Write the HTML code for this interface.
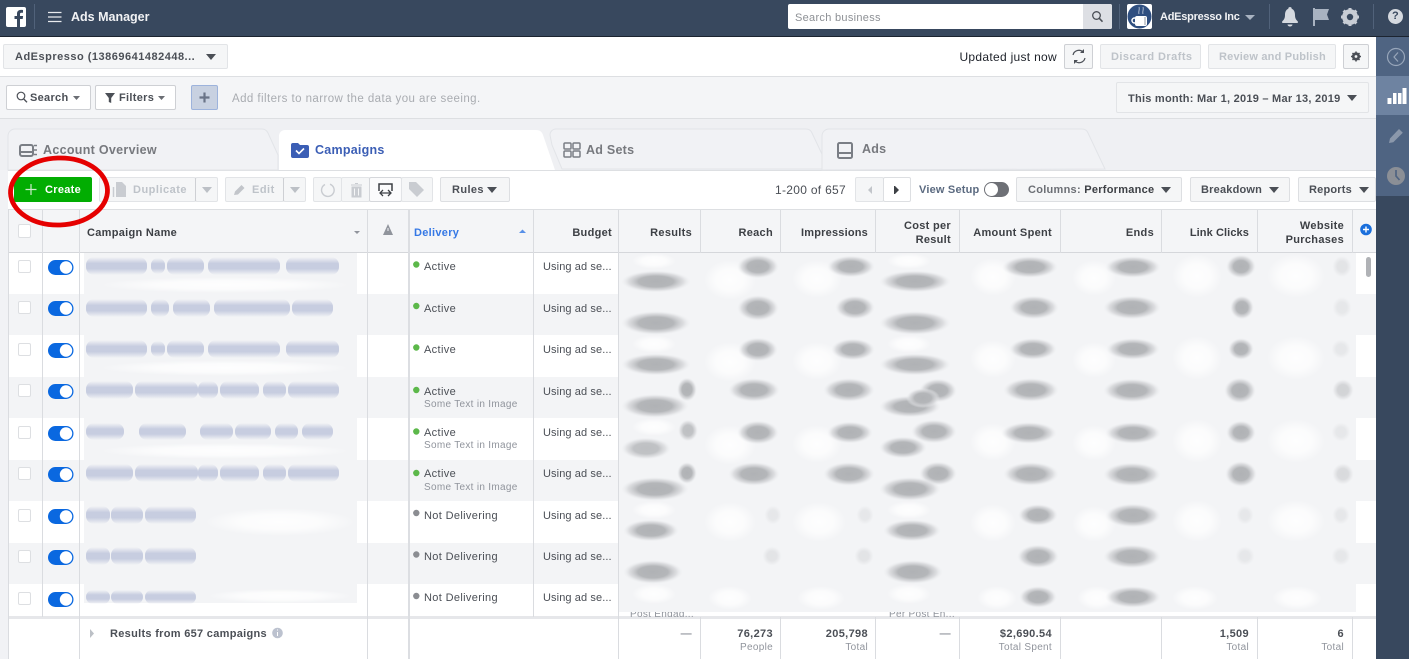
<!DOCTYPE html>
<html><head><meta charset="utf-8"><title>Ads Manager</title>
<style>
html,body{margin:0;padding:0}
body{width:1409px;height:659px;overflow:hidden;position:relative;background:#f1f2f5;font-family:"Liberation Sans",sans-serif;font-size:11px;color:#4b4f56}
#p{position:absolute;left:0;top:0;width:1409px;height:659px;overflow:hidden}
.a{position:absolute;box-sizing:border-box}
.t{position:absolute;white-space:nowrap;line-height:14px;letter-spacing:.35px}
.r{text-align:right}
.b{font-weight:bold}
.btn{position:absolute;box-sizing:border-box;background:#f5f6f7;border:1px solid #e2e4e7;border-radius:2px}
.w{background:#fff;border:1px solid #ced0d4}
.d{color:#bec3c9;font-weight:bold}
.h{font-weight:bold;color:#3d4045;letter-spacing:.3px}
.s{color:#90949c;font-size:10px;letter-spacing:.3px}
.v{color:#4b4f56;letter-spacing:.35px}
svg{position:absolute;left:0;top:0}
</style></head><body><div id="p">

<!-- header -->
<div class="a" style="left:0;top:0;width:1409px;height:37px;background:#38485e;border-bottom:1px solid #1c2430"></div>
<!-- white account bar -->
<div class="a" style="left:0;top:37px;width:1376px;height:40px;background:#fff;border-bottom:1px solid #dddfe2"></div>
<!-- filter bar -->
<div class="a" style="left:0;top:77px;width:1376px;height:42px;background:#f4f5f7;border-bottom:1px solid #dddfe2"></div>
<!-- tab zone -->
<div class="a" style="left:0;top:119px;width:1376px;height:51px;background:#eff0f3"></div>
<!-- toolbar -->
<div class="a" style="left:8px;top:170px;width:1368px;height:40px;background:#fff;border-top:1px solid #dddfe2"></div>
<!-- table header -->
<div class="a" style="left:8px;top:209px;width:1368px;height:44px;background:#f4f5f7;border-top:1px solid #dddfe2;border-bottom:1px solid #d5d7db"></div>
<!-- rows -->
<div class="a" style="left:8px;top:253px;width:1368px;height:364px;background:#fff"></div>
<div class="a" style="left:8px;top:294px;width:1368px;height:41px;background:#f3f4f6"></div>
<div class="a" style="left:8px;top:377px;width:1368px;height:41px;background:#f3f4f6"></div>
<div class="a" style="left:8px;top:460px;width:1368px;height:41px;background:#f3f4f6"></div>
<div class="a" style="left:8px;top:543px;width:1368px;height:41px;background:#f3f4f6"></div>
<!-- footer -->
<div class="a" style="left:8px;top:616px;width:1368px;height:43px;background:#fff;border-top:3px solid #e6e7ea"></div>

<svg width="1409" height="659" viewBox="0 0 1409 659">
<defs>
<radialGradient id="gg"><stop offset="0" stop-color="#b0b2b5"/><stop offset=".5" stop-color="#b4b6b9"/><stop offset=".78" stop-color="#d4d5d8" stop-opacity=".75"/><stop offset="1" stop-color="#eceef0" stop-opacity="0"/></radialGradient>
<radialGradient id="gw"><stop offset="0" stop-color="#fff" stop-opacity=".9"/><stop offset=".55" stop-color="#fff" stop-opacity=".7"/><stop offset="1" stop-color="#fff" stop-opacity="0"/></radialGradient>
<linearGradient id="gb" x1="0" y1="0" x2="0" y2="1"><stop offset="0" stop-color="#c7cde0" stop-opacity="0"/><stop offset=".35" stop-color="#c7cde0"/><stop offset=".65" stop-color="#c7cde0"/><stop offset="1" stop-color="#c7cde0" stop-opacity="0"/></linearGradient>
</defs>
<!-- column lines -->
<g stroke="#dadce0" stroke-width="1" fill="none">
<path d="M8.5 209V659M42.5 210V617M79.5 210V659M367.5 210V659M533.5 210V617M618.5 210V659M700.5 210V253M700.5 617V659M780.5 210V253M780.5 617V659M875.5 210V253M875.5 617V659M959.5 210V253M959.5 617V659M1060.5 210V253M1060.5 617V659M1161.5 210V253M1161.5 617V659M1257.5 210V253M1257.5 617V659M1352.5 210V253M1352.5 617V659"/>
</g>
<rect x="408" y="210" width="2" height="449" fill="#dcdee2"/>
<!-- blurred metrics base -->
<rect x="619" y="253" width="737" height="359" fill="#f3f4f6"/>
<rect x="84" y="253" width="273" height="350" fill="#f3f4f6"/>

<!-- white blotches -->
<g fill="url(#gw)">
<ellipse cx="654" cy="261" rx="22" ry="8"/><ellipse cx="730" cy="280" rx="26" ry="20"/><ellipse cx="817" cy="279" rx="25" ry="19"/><ellipse cx="909" cy="261" rx="22" ry="8"/><ellipse cx="993" cy="277" rx="23" ry="19"/><ellipse cx="1094" cy="278" rx="22" ry="18"/><ellipse cx="1197" cy="276" rx="25" ry="22"/><ellipse cx="1296" cy="276" rx="29" ry="22"/>
<ellipse cx="654" cy="344" rx="22" ry="9"/><ellipse cx="730" cy="362" rx="26" ry="20"/><ellipse cx="817" cy="361" rx="25" ry="19"/><ellipse cx="909" cy="344" rx="22" ry="9"/><ellipse cx="993" cy="359" rx="23" ry="19"/><ellipse cx="1094" cy="360" rx="22" ry="18"/><ellipse cx="1197" cy="358" rx="25" ry="22"/><ellipse cx="1296" cy="358" rx="29" ry="22"/>
<ellipse cx="654" cy="427" rx="22" ry="9"/><ellipse cx="730" cy="445" rx="26" ry="20"/><ellipse cx="817" cy="444" rx="25" ry="19"/><ellipse cx="1094" cy="443" rx="22" ry="18"/><ellipse cx="993" cy="442" rx="23" ry="19"/><ellipse cx="1197" cy="441" rx="25" ry="22"/><ellipse cx="1296" cy="441" rx="29" ry="22"/>
<ellipse cx="654" cy="510" rx="22" ry="9"/><ellipse cx="730" cy="522" rx="26" ry="20"/><ellipse cx="819" cy="522" rx="27" ry="20"/><ellipse cx="909" cy="510" rx="22" ry="9"/><ellipse cx="993" cy="523" rx="23" ry="19"/><ellipse cx="1094" cy="524" rx="22" ry="18"/><ellipse cx="1197" cy="521" rx="25" ry="21"/><ellipse cx="1296" cy="521" rx="29" ry="21"/>
<ellipse cx="654" cy="594" rx="22" ry="10"/><ellipse cx="730" cy="598" rx="22" ry="12"/><ellipse cx="821" cy="598" rx="24" ry="12"/><ellipse cx="909" cy="594" rx="22" ry="10"/><ellipse cx="997" cy="598" rx="20" ry="12"/><ellipse cx="1097" cy="598" rx="20" ry="12"/><ellipse cx="1195" cy="598" rx="23" ry="12"/><ellipse cx="1297" cy="598" rx="25" ry="12"/>
<ellipse cx="225" cy="285" rx="125" ry="8"/><ellipse cx="225" cy="368" rx="125" ry="8"/><ellipse cx="225" cy="451" rx="125" ry="8"/><ellipse cx="280" cy="522" rx="75" ry="14"/><ellipse cx="280" cy="596" rx="72" ry="7"/>
</g>

<!-- gray metric blobs -->
<g fill="url(#gg)">
<ellipse cx="656" cy="281.500" rx="35" ry="11"/><ellipse cx="758" cy="266.500" rx="21" ry="12"/><ellipse cx="851" cy="266.500" rx="24" ry="11"/><ellipse cx="915" cy="281.500" rx="36" ry="11"/><ellipse cx="1030" cy="267" rx="28" ry="11"/><ellipse cx="1133" cy="267" rx="28" ry="11"/><ellipse cx="1241" cy="266.500" rx="15" ry="12"/><ellipse cx="1342" cy="266.500" rx="10" ry="11" opacity=".25"/>
<ellipse cx="656" cy="323" rx="35" ry="12"/><ellipse cx="758" cy="308" rx="21" ry="13"/><ellipse cx="855" cy="307.500" rx="20" ry="12"/><ellipse cx="915" cy="323" rx="36" ry="12"/><ellipse cx="1034" cy="307.500" rx="25" ry="12"/><ellipse cx="1132" cy="307.500" rx="29" ry="12"/><ellipse cx="1242" cy="307.500" rx="12" ry="12"/><ellipse cx="1342" cy="307.500" rx="10" ry="11" opacity=".2"/>
<ellipse cx="656" cy="364.500" rx="35" ry="11"/><ellipse cx="758" cy="349.500" rx="20" ry="12"/><ellipse cx="853" cy="349.500" rx="22" ry="11"/><ellipse cx="915" cy="364.500" rx="36" ry="11"/><ellipse cx="1033" cy="349" rx="24" ry="11"/><ellipse cx="1133" cy="349" rx="27" ry="11"/><ellipse cx="1241" cy="349" rx="13" ry="11"/><ellipse cx="1341" cy="349" rx="10" ry="10" opacity=".2"/>
<ellipse cx="687" cy="389.500" rx="10" ry="12"/><ellipse cx="655" cy="406" rx="34" ry="12"/><ellipse cx="754" cy="390" rx="26" ry="12"/><ellipse cx="849" cy="390" rx="26" ry="12"/><ellipse cx="938" cy="390.500" rx="19" ry="12"/><ellipse cx="910" cy="406.500" rx="31" ry="11"/><ellipse cx="923" cy="398" rx="17" ry="10"/><ellipse cx="1031" cy="390" rx="28" ry="12"/><ellipse cx="1132" cy="390.500" rx="29" ry="12"/><ellipse cx="1240" cy="390.500" rx="16" ry="13"/><ellipse cx="1343" cy="390" rx="11" ry="11" opacity=".5"/>
<ellipse cx="688" cy="430.500" rx="10" ry="11" opacity=".8"/><ellipse cx="646" cy="448.500" rx="25" ry="11" opacity=".8"/><ellipse cx="758" cy="432.500" rx="21" ry="12"/><ellipse cx="850" cy="432.500" rx="23" ry="11"/><ellipse cx="934" cy="431.500" rx="23" ry="12"/><ellipse cx="903" cy="447.500" rx="24" ry="11"/><ellipse cx="1029" cy="433" rx="28" ry="11"/><ellipse cx="1133" cy="433" rx="28" ry="11"/><ellipse cx="1241" cy="432.500" rx="15" ry="12"/><ellipse cx="1341" cy="432" rx="10" ry="10" opacity=".2"/>
<ellipse cx="687" cy="473" rx="10" ry="11"/><ellipse cx="655" cy="489" rx="34" ry="12"/><ellipse cx="754" cy="474" rx="26" ry="12"/><ellipse cx="849" cy="474" rx="26" ry="12"/><ellipse cx="938" cy="473.500" rx="19" ry="12"/><ellipse cx="910" cy="489" rx="31" ry="12"/><ellipse cx="1031" cy="474" rx="28" ry="12"/><ellipse cx="1132" cy="474.500" rx="29" ry="12"/><ellipse cx="1241" cy="474" rx="16" ry="13"/><ellipse cx="1343" cy="474" rx="11" ry="11" opacity=".4"/>
<ellipse cx="651" cy="530.500" rx="28" ry="11"/><ellipse cx="773" cy="515" rx="9" ry="10" opacity=".2"/><ellipse cx="865" cy="515" rx="9" ry="10" opacity=".2"/><ellipse cx="912" cy="530.500" rx="29" ry="11"/><ellipse cx="1038" cy="515" rx="20" ry="11"/><ellipse cx="1133" cy="515.500" rx="28" ry="12"/><ellipse cx="1245" cy="515" rx="9" ry="10" opacity=".2"/><ellipse cx="1341" cy="515" rx="9" ry="10" opacity=".2"/>
<ellipse cx="653" cy="572" rx="30" ry="12"/><ellipse cx="772" cy="556" rx="10" ry="10" opacity=".25"/><ellipse cx="864" cy="556" rx="10" ry="10" opacity=".25"/><ellipse cx="913" cy="572" rx="30" ry="12"/><ellipse cx="1038" cy="556.500" rx="21" ry="12"/><ellipse cx="1132" cy="556.500" rx="29" ry="12"/><ellipse cx="1245" cy="556" rx="10" ry="10" opacity=".2"/><ellipse cx="1341" cy="556" rx="10" ry="10" opacity=".2"/>
<ellipse cx="1038" cy="597" rx="19" ry="11"/><ellipse cx="1133" cy="597" rx="28" ry="11"/>
</g>

<!-- blue campaign name blobs -->
<g fill="url(#gb)">
<rect x="86" y="257" width="61" height="18" rx="8"/><rect x="151" y="258" width="14" height="16" rx="7"/><rect x="167" y="257" width="37" height="18" rx="8"/><rect x="208" y="257" width="72" height="18" rx="8"/><rect x="286" y="257" width="53" height="18" rx="8"/>
<rect x="86" y="299" width="61" height="18" rx="8"/><rect x="151" y="299" width="18" height="18" rx="8"/><rect x="173" y="299" width="37" height="18" rx="8"/><rect x="214" y="299" width="76" height="18" rx="8"/><rect x="292" y="299" width="41" height="18" rx="8"/>
<rect x="86" y="340" width="61" height="18" rx="8"/><rect x="151" y="341" width="14" height="16" rx="7"/><rect x="167" y="340" width="37" height="18" rx="8"/><rect x="208" y="340" width="72" height="18" rx="8"/><rect x="286" y="340" width="53" height="18" rx="8"/>
<rect x="86" y="381" width="47" height="18" rx="8"/><rect x="135" y="381" width="63" height="18" rx="8"/><rect x="198" y="381" width="20" height="18" rx="8"/><rect x="220" y="381" width="39" height="18" rx="8"/><rect x="263" y="381" width="23" height="18" rx="8"/><rect x="288" y="381" width="51" height="18" rx="8"/>
<rect x="86" y="423" width="38" height="17" rx="8"/><rect x="139" y="423" width="47" height="17" rx="8"/><rect x="200" y="423" width="33" height="17" rx="8"/><rect x="235" y="423" width="36" height="17" rx="8"/><rect x="275" y="423" width="23" height="17" rx="8"/><rect x="302" y="423" width="31" height="17" rx="8"/>
<rect x="86" y="464" width="47" height="18" rx="8"/><rect x="135" y="464" width="63" height="18" rx="8"/><rect x="198" y="464" width="20" height="18" rx="8"/><rect x="220" y="464" width="39" height="18" rx="8"/><rect x="263" y="464" width="23" height="18" rx="8"/><rect x="288" y="464" width="51" height="18" rx="8"/>
<rect x="86" y="506" width="24" height="18" rx="8"/><rect x="111" y="506" width="32" height="18" rx="8"/><rect x="145" y="506" width="51" height="18" rx="8"/>
<rect x="86" y="547" width="24" height="18" rx="8"/><rect x="111" y="547" width="32" height="18" rx="8"/><rect x="145" y="547" width="51" height="18" rx="8"/>
<rect x="86" y="590" width="24" height="14" rx="7"/><rect x="111" y="590" width="32" height="14" rx="7"/><rect x="145" y="590" width="51" height="14" rx="7"/>
</g>

<!-- facebook logo -->
<rect x="6" y="7" width="20" height="20" rx="2" fill="#fff"/>
<path d="M20 27v-8h2.700l.4-3H20v-1.900c0-.9.3-1.400 1.500-1.400H23V10c-.3 0-1.200-.1-2.200-.1-2.200 0-3.800 1.400-3.800 3.800V16h-2.500v3H17v8z" fill="#38485e"/>
<path d="M34.500 4V29M1119.500 4V29M1269.500 4V29M1373.500 4V29" stroke="#51627a"/>
<path d="M48 12.500H61.500M48 17H61.500M48 21.500H61.500" stroke="#e9ebee" stroke-width="1.300"/>

<!-- search box -->
<rect x="788" y="4" width="324" height="25" rx="2" fill="#fff"/>
<path d="M1083 4h27a2 2 0 0 1 2 2v21a2 2 0 0 1-2 2h-27z" fill="#dddfe4"/>
<circle cx="1096.500" cy="15.500" r="3.800" fill="none" stroke="#4b4f56" stroke-width="1.300"/><path d="M1099.300 18.300l3.200 3.400" stroke="#4b4f56" stroke-width="1.500"/>
<!-- avatar -->
<rect x="1127" y="4" width="25" height="25" rx="2" fill="#fff"/>
<circle cx="1139.500" cy="16.500" r="12" fill="#2f4f80"/>
<rect x="1135" y="16" width="12" height="10" rx="2" fill="#fff"/>
<circle cx="1134.500" cy="20.500" r="2.500" fill="none" stroke="#fff" stroke-width="1.500"/>
<rect x="1144" y="17" width="2" height="8" fill="#c9ccd1"/>
<path d="M1139 14c-1-2.500 1-4 0-7M1143 14c-1-2.500 1-4 0-7" stroke="#a8b6cc" fill="none"/>
<path d="M1245 15h10l-5 5z" fill="#a9b3c1"/>
<!-- bell -->
<path d="M1290 7c-1.200 0-1.700.8-1.700 1.700-2.500 1-3.300 3.500-3.300 6.300 0 3-1 5-2.800 6.200V23h15.600v-1.800c-1.800-1.200-2.800-3.200-2.800-6.200 0-2.800-.8-5.300-3.300-6.300 0-.9-.5-1.700-1.700-1.700z" fill="#d5d9df"/><path d="M1287.500 24.500a2.500 2 0 0 0 5 0z" fill="#d5d9df"/>
<!-- flag -->
<path d="M1314 8v18" stroke="#a9b3c1" stroke-width="2"/><path d="M1315 9h14l-2 5.500 2 5.500h-14z" fill="#a9b3c1"/>
<!-- gear -->
<circle cx="1350" cy="17" r="5.800" fill="none" stroke="#c8cdd5" stroke-width="4.200"/>
<path d="M1350 8v18M1341 17h18M1343.600 10.600l12.800 12.800M1356.400 10.600l-12.800 12.800" stroke="#c8cdd5" stroke-width="3" />
<circle cx="1350" cy="17" r="3.200" fill="#38485e"/>
<!-- help -->
<circle cx="1395.500" cy="16.500" r="7.500" fill="#d5d9df"/>

<!-- sidebar -->
<rect x="1376" y="37" width="33" height="159" fill="#4f6482"/>
<rect x="1376" y="76" width="33" height="39" fill="#6e83a1"/>
<rect x="1376" y="196" width="33" height="463" fill="#38485e"/>
<circle cx="1396" cy="57" r="8.500" fill="none" stroke="#98a6ba" stroke-width="1.200"/><path d="M1398 52.500l-4 4.500 4 4.500" fill="none" stroke="#98a6ba" stroke-width="1.200"/>
<rect x="1387.500" y="98" width="4" height="6" fill="#fff"/><rect x="1393" y="93" width="3.500" height="11" fill="#fff"/><rect x="1398" y="93" width="3.500" height="11" fill="#fff"/><rect x="1402.500" y="88" width="4" height="16" fill="#fff"/>
<path d="M1389 143l1-4.500 9-9.500 3.800 3.800-9.500 9.400z" fill="#8b98ab"/>
<circle cx="1396" cy="176" r="9" fill="#8b8f96"/><path d="M1396 170v6l3.500 4" fill="none" stroke="#4f6482" stroke-width="1.700"/>

<!-- tabs -->
<path d="M8 170V136a7 7 0 0 1 7-7H262c3 0 5 2 6 4l10 22V170z" fill="#f1f2f5" stroke="#e2e4e8"/>
<path d="M279 170V136a6 6 0 0 1 6-6H536c4 0 6 2 7 5l12 35z" fill="#fff"/>
<path d="M550 135a6 6 0 0 1 6-6H806c3 0 5 1.500 6 4l17 36H562L552 145z" fill="#f1f2f5" stroke="#e2e4e8"/>
<path d="M822 170V136a7 7 0 0 1 7-7H1082c3 0 5 1.500 6 4l17 36z" fill="#f1f2f5" stroke="#e2e4e8"/>
<!-- account overview icon -->
<rect x="20" y="145" width="13" height="11" rx="2" fill="none" stroke="#7a7e85" stroke-width="2"/><rect x="21" y="151" width="11" height="2" fill="#7a7e85"/><path d="M34 145.500h3M34 150h3M34 154.500h3" stroke="#7a7e85" stroke-width="1.400"/>
<!-- campaigns icon -->
<path d="M291 145a2 2 0 0 1 2-2h5l2 2h7a2 2 0 0 1 2 2v9a2 2 0 0 1-2 2h-14a2 2 0 0 1-2-2z" fill="#3b5eb5"/><path d="M296 150.500l3 3 5-5" fill="none" stroke="#fff" stroke-width="1.600"/>
<!-- ad sets icon -->
<g fill="none" stroke="#7a7e85" stroke-width="1.500"><rect x="564" y="143" width="7" height="6" rx="1"/><rect x="573" y="143" width="7" height="6" rx="1"/><rect x="564" y="151" width="7" height="6" rx="1"/><rect x="573" y="151" width="7" height="6" rx="1"/></g>
<!-- ads icon -->
<rect x="838" y="143" width="14" height="15" rx="1.500" fill="none" stroke="#7a7e85" stroke-width="2"/><rect x="838" y="152" width="14" height="2" fill="#7a7e85"/>
</svg>

<!-- top bar text -->
<div class="t" style="left:71px;top:10px;color:#f1f2f4;font-size:12.500px;font-weight:bold;letter-spacing:0">Ads Manager</div>
<div class="t" style="left:795px;top:11px;color:#8d9095;font-size:11px;letter-spacing:.3px">Search business</div>
<div class="t" style="left:1160px;top:10px;color:#f1f2f4;font-size:11px;font-weight:bold;letter-spacing:-.25px">AdEspresso Inc</div>
<div class="t" style="left:1392px;top:9px;color:#38485e;font-size:11px;font-weight:bold">?</div>

<!-- account row -->
<div class="btn" style="left:3px;top:44px;width:225px;height:25px"></div>
<div class="t b" style="left:15px;top:50px;letter-spacing:.5px">AdEspresso (13869641482448...</div>
<div class="t" style="right:352px;top:50px;color:#1d2129;font-size:12px;letter-spacing:.3px">Updated just now</div>
<div class="btn" style="left:1064px;top:44px;width:29px;height:25px;border-color:#ced0d4"></div>
<div class="btn" style="left:1100px;top:44px;width:101px;height:25px"></div>
<div class="t d" style="left:1111px;top:50px;letter-spacing:.45px">Discard Drafts</div>
<div class="btn" style="left:1208px;top:44px;width:128px;height:25px"></div>
<div class="t d" style="left:1219px;top:50px;letter-spacing:.2px">Review and Publish</div>
<div class="btn" style="left:1343px;top:44px;width:26px;height:25px;border-color:#ced0d4"></div>

<!-- filter row -->
<div class="btn w" style="left:6px;top:85px;width:85px;height:25px"></div>
<div class="t b" style="left:30px;top:91px;letter-spacing:.3px">Search</div>
<div class="btn w" style="left:95px;top:85px;width:81px;height:25px"></div>
<div class="t b" style="left:119px;top:91px;letter-spacing:.3px">Filters</div>
<div class="btn" style="left:191px;top:85px;width:27px;height:25px;background:#c8d1e1;border-color:#9db3dc"></div>
<div class="t" style="left:232px;top:92px;color:#a9acb1;font-size:11.500px;letter-spacing:.43px">Add filters to narrow the data you are seeing.</div>
<div class="btn" style="left:1116px;top:82px;width:253px;height:31px"></div>
<div class="t b" style="left:1128px;top:92px;letter-spacing:.25px">This month: Mar 1, 2019 – Mar 13, 2019</div>

<!-- tabs text -->
<div class="t b" style="left:43px;top:143px;font-size:12.500px;color:#77797e;letter-spacing:.3px">Account Overview</div>
<div class="t b" style="left:315px;top:143px;font-size:12.500px;color:#3b5eb5;letter-spacing:.25px">Campaigns</div>
<div class="t b" style="left:586px;top:143px;font-size:12.500px;color:#77797e;letter-spacing:.25px">Ad Sets</div>
<div class="t b" style="left:862px;top:142px;font-size:12.500px;color:#77797e;letter-spacing:.25px">Ads</div>

<!-- toolbar -->
<div class="a" style="left:14px;top:177px;width:78px;height:25px;background:#02ad02;border-radius:2px"></div>
<div class="t b" style="left:45px;top:183px;color:#fff;letter-spacing:.3px">Create</div>
<div class="btn" style="left:99px;top:177px;width:97px;height:25px"></div>
<div class="btn" style="left:195px;top:177px;width:23px;height:25px;border-left-color:#ced0d4"></div>
<div class="t d" style="left:133px;top:183px;letter-spacing:.5px">Duplicate</div>
<div class="btn" style="left:225px;top:177px;width:59px;height:25px"></div>
<div class="btn" style="left:283px;top:177px;width:23px;height:25px;border-left-color:#ced0d4"></div>
<div class="t d" style="left:252px;top:183px;letter-spacing:.5px">Edit</div>
<div class="btn" style="left:313px;top:177px;width:29px;height:25px"></div>
<div class="btn" style="left:341px;top:177px;width:29px;height:25px"></div>
<div class="btn" style="left:369px;top:177px;width:33px;height:25px;background:#fbfbfc;border-color:#d5d7db"></div>
<div class="btn" style="left:401px;top:177px;width:32px;height:25px"></div>
<div class="btn" style="left:440px;top:177px;width:70px;height:25px;border-color:#dddfe2"></div>
<div class="t b" style="left:452px;top:183px;letter-spacing:.4px">Rules</div>
<div class="t" style="left:775px;top:183px;color:#4b4f56;font-size:12px;letter-spacing:.3px">1-200 of 657</div>
<div class="btn" style="left:855px;top:177px;width:29px;height:25px"></div>
<div class="btn w" style="left:883px;top:177px;width:28px;height:25px;border-color:#dddfe2"></div>
<div class="t b" style="left:919px;top:183px;color:#5b6a80;letter-spacing:.2px">View Setup</div>
<div class="a" style="left:984px;top:182px;width:25px;height:15px;border-radius:8px;background:#6e7076"></div>
<div class="a" style="left:985px;top:183px;width:13px;height:13px;border-radius:50%;background:#fff"></div>
<div class="btn" style="left:1016px;top:177px;width:166px;height:25px;border-color:#dddfe2"></div>
<div class="t" style="left:1028px;top:183px;letter-spacing:.27px;font-weight:bold;color:#6b6e74">Columns: <span style="color:#3d4045">Performance</span></div>
<div class="btn" style="left:1190px;top:177px;width:100px;height:25px;border-color:#dddfe2"></div>
<div class="t b" style="left:1201px;top:183px;letter-spacing:.2px">Breakdown</div>
<div class="btn" style="left:1298px;top:177px;width:78px;height:25px;border-color:#dddfe2"></div>
<div class="t b" style="left:1309px;top:183px;letter-spacing:.2px">Reports</div>

<!-- toolbar and misc icons -->
<svg width="1409" height="659" viewBox="0 0 1409 659" style="pointer-events:none">
<!-- carets -->
<g fill="#4b4f56">
<path d="M206 54h10l-5 6z"/>
<path d="M1347 95h10l-5 6z"/>
<path d="M73 96h7l-3.500 4zM158 96h7l-3.500 4z" fill="#6b6e74"/>
<path d="M487 187h10l-5 6z"/>
<path d="M1161 187h10l-5 6zM1269 187h10l-5 6zM1359 187h10l-5 6z"/>
</g>
<g fill="#bcc0c6"><path d="M202 187h10l-5 6zM290 187h10l-5 6z"/></g>
<!-- refresh -->
<path d="M1073 55a6 6 0 0 1 10-3M1085 58a6 6 0 0 1-10 3" fill="none" stroke="#4b4f56" stroke-width="1.200"/><path d="M1084 49v4h-4zM1074 64v-4h4z" fill="#4b4f56"/>
<!-- small gear -->
<circle cx="1356" cy="56.500" r="3" fill="none" stroke="#4b4f56" stroke-width="2.200"/>
<path d="M1356 51.500v10M1351 56.500h10M1352.500 53l7 7M1359.500 53l-7 7" stroke="#4b4f56" stroke-width="1.500"/><circle cx="1356" cy="56.500" r="1.400" fill="#f5f6f7"/>
<!-- search icon -->
<circle cx="21" cy="96" r="3.800" fill="none" stroke="#4b4f56" stroke-width="1.200"/><path d="M23.800 99l3.200 3.300" stroke="#4b4f56" stroke-width="1.400"/>
<!-- filter icon -->
<path d="M105 93h10l-3.800 5v5l-2.400-1v-4z" fill="#4b4f56"/>
<!-- plus filter -->
<path d="M204.500 92.500v10M199.500 97.500h10" stroke="#6a7488" stroke-width="2.200"/>
<!-- create plus -->
<path d="M31 184v11M25.500 189.500h11" stroke="#cdeccd" stroke-width="1.200"/>
<!-- duplicate -->
<path d="M116 182h6l4 4v11h-10z" fill="#c9ccd1"/><path d="M113.500 187v10" stroke="#c9ccd1" stroke-width="1.500"/>
<!-- edit pencil -->
<path d="M234 195l1-3.500 6.500-6.500 3 3-6.500 6.500z" fill="#c2c5ca"/>
<!-- refresh, trash -->
<path d="M325 184.500a6.300 6.300 0 1 0 5 -.3" fill="none" stroke="#c9ccd1" stroke-width="1.400"/>
<path d="M351 185h11M352 187h9v10h-9z" fill="#c9ccd1" stroke="#c9ccd1"/><path d="M355 183.500h3" stroke="#c9ccd1"/><path d="M354.500 188.500v7M358.500 188.500v7" stroke="#f5f6f7"/>
<!-- active compare icon -->
<path d="M379 191v-7h13v7" fill="none" stroke="#3d4045" stroke-width="1.500"/><path d="M383 190l-3 3 3 3M388 190l3 3-3 3M380 193h11" fill="none" stroke="#3d4045" stroke-width="1.300"/>
<!-- tag -->
<path d="M409 182h7l8 8-7 7-8-8z" fill="#c9ccd1"/>
<!-- pager -->
<path d="M872 186v8l-4-4z" fill="#c2c5ca"/><path d="M895 186v8l4-4z" fill="#3d4045"/>
<rect x="894" y="186" width="1" height="8" fill="#3d4045"/>
<!-- header sort and warning -->
<path d="M354 231h6l-3 3z" fill="#90949c"/>
<path d="M388 224l5 11h-10z" fill="#90949c"/><rect x="387.500" y="228" width="1" height="3" fill="#f4f5f7"/>
<path d="M519 233h7l-3.500-3.500z" fill="#5890e8"/>
<circle cx="1366" cy="229.500" r="5.800" fill="#1a6fdc"/><path d="M1366 226.500v6M1363 229.500h6" stroke="#fff" stroke-width="1.400"/>
<!-- scrollbar -->
<rect x="1366" y="257" width="5" height="20" rx="2.500" fill="#b0b2b6"/>
<!-- footer small -->
<path d="M90 629l4 4.500-4 4.500z" fill="#bcc0c6"/>
<circle cx="277.500" cy="633" r="5.300" fill="#bcc2cf"/><path d="M277.500 632v4M277.500 629.500v1" stroke="#fff"/>
<!-- checkboxes -->
<g fill="#fff" stroke="#dddfe2">
<rect x="18.500" y="224.500" width="12" height="13" rx="1.500"/>
<rect x="18.500" y="260.500" width="12" height="12" rx="1.500"/><rect x="18.500" y="301.500" width="12" height="12" rx="1.500"/><rect x="18.500" y="343.500" width="12" height="12" rx="1.500"/><rect x="18.500" y="384.500" width="12" height="12" rx="1.500"/><rect x="18.500" y="426.500" width="12" height="12" rx="1.500"/><rect x="18.500" y="467.500" width="12" height="12" rx="1.500"/><rect x="18.500" y="509.500" width="12" height="12" rx="1.500"/><rect x="18.500" y="550.500" width="12" height="12" rx="1.500"/><rect x="18.500" y="592.500" width="12" height="12" rx="1.500"/>
</g>
<!-- toggles -->
<g fill="#0a68e0">
<rect x="48" y="260" width="25.500" height="15" rx="7.500"/><rect x="48" y="301" width="25.500" height="15" rx="7.500"/><rect x="48" y="343" width="25.500" height="15" rx="7.500"/><rect x="48" y="384" width="25.500" height="15" rx="7.500"/><rect x="48" y="426" width="25.500" height="15" rx="7.500"/><rect x="48" y="467" width="25.500" height="15" rx="7.500"/><rect x="48" y="509" width="25.500" height="15" rx="7.500"/><rect x="48" y="550" width="25.500" height="15" rx="7.500"/><rect x="48" y="592" width="25.500" height="15" rx="7.500"/>
</g>
<g fill="#fff">
<circle cx="66" cy="267.500" r="6.200"/><circle cx="66" cy="308.500" r="6.200"/><circle cx="66" cy="350.500" r="6.200"/><circle cx="66" cy="391.500" r="6.200"/><circle cx="66" cy="433.500" r="6.200"/><circle cx="66" cy="474.500" r="6.200"/><circle cx="66" cy="516.500" r="6.200"/><circle cx="66" cy="557.500" r="6.200"/><circle cx="66" cy="599.500" r="6.200"/>
</g>
<!-- status dots -->
<g fill="#5cb84a">
<circle cx="416.300" cy="264.500" r="3.200"/><circle cx="416.300" cy="306" r="3.200"/><circle cx="416.300" cy="347.500" r="3.200"/><circle cx="416.300" cy="390" r="3.200"/><circle cx="416.300" cy="431.500" r="3.200"/><circle cx="416.300" cy="473" r="3.200"/>
</g>
<g fill="#8b8d92">
<circle cx="416.300" cy="513" r="3.200"/><circle cx="416.300" cy="554.500" r="3.200"/><circle cx="416.300" cy="596" r="3.200"/>
</g>
<!-- red ellipse -->
<ellipse cx="59" cy="191.500" rx="48.500" ry="33.500" transform="rotate(-2 59 191.500)" fill="none" stroke="#e50000" stroke-width="4.800"/>
</svg>

<!-- table header text -->
<div class="t h" style="left:87px;top:226px">Campaign Name</div>
<div class="t h" style="left:414px;top:226px;color:#3578e5">Delivery</div>
<div class="t h r" style="right:797px;top:226px">Budget</div>
<div class="t h r" style="right:717px;top:226px">Results</div>
<div class="t h r" style="right:636px;top:226px">Reach</div>
<div class="t h r" style="right:541px;top:226px;letter-spacing:.2px">Impressions</div>
<div class="t h r" style="right:458px;top:219px">Cost per<br>Result</div>
<div class="t h r" style="right:357px;top:226px">Amount Spent</div>
<div class="t h r" style="right:255px;top:226px">Ends</div>
<div class="t h r" style="right:160px;top:226px;letter-spacing:.1px">Link Clicks</div>
<div class="t h r" style="right:65px;top:219px">Website<br>Purchases</div>

<!-- delivery + budget -->
<div class="t" style="left:424px;top:260px">Active</div>
<div class="t" style="left:424px;top:302px">Active</div>
<div class="t" style="left:424px;top:343px">Active</div>
<div class="t" style="left:424px;top:385px">Active</div>
<div class="t s" style="left:424px;top:398px">Some Text in Image</div>
<div class="t" style="left:424px;top:426px">Active</div>
<div class="t s" style="left:424px;top:439px">Some Text in Image</div>
<div class="t" style="left:424px;top:467px">Active</div>
<div class="t s" style="left:424px;top:481px">Some Text in Image</div>
<div class="t" style="left:424px;top:509px">Not Delivering</div>
<div class="t" style="left:424px;top:550px">Not Delivering</div>
<div class="t" style="left:424px;top:591px">Not Delivering</div>
<div class="t" style="left:543px;top:260px;letter-spacing:.1px">Using ad se...</div>
<div class="t" style="left:543px;top:302px;letter-spacing:.1px">Using ad se...</div>
<div class="t" style="left:543px;top:343px;letter-spacing:.1px">Using ad se...</div>
<div class="t" style="left:543px;top:385px;letter-spacing:.1px">Using ad se...</div>
<div class="t" style="left:543px;top:426px;letter-spacing:.1px">Using ad se...</div>
<div class="t" style="left:543px;top:467px;letter-spacing:.1px">Using ad se...</div>
<div class="t" style="left:543px;top:509px;letter-spacing:.1px">Using ad se...</div>
<div class="t" style="left:543px;top:550px;letter-spacing:.1px">Using ad se...</div>
<div class="t" style="left:543px;top:591px;letter-spacing:.1px">Using ad se...</div>

<!-- clipped row text -->
<div class="a" style="left:619px;top:612px;width:737px;height:5px;overflow:hidden">
<div class="t s" style="left:11px;top:-4px">Post Engag...</div>
<div class="t s" style="left:270px;top:-4px">Per Post En...</div>
</div>

<!-- footer -->
<div class="t b" style="left:110px;top:627px;letter-spacing:.3px">Results from 657 campaigns</div>
<div class="t b r" style="right:717px;top:627px;color:#90949c">—</div>
<div class="t b r v" style="right:636px;top:627px">76,273</div>
<div class="t b r v" style="right:541px;top:627px">205,798</div>
<div class="t b r" style="right:458px;top:627px;color:#90949c">—</div>
<div class="t b r v" style="right:357px;top:627px">$2,690.54</div>
<div class="t b r v" style="right:160px;top:627px">1,509</div>
<div class="t b r v" style="right:65px;top:627px">6</div>
<div class="t s r" style="right:636px;top:641px">People</div>
<div class="t s r" style="right:541px;top:641px">Total</div>
<div class="t s r" style="right:357px;top:641px">Total Spent</div>
<div class="t s r" style="right:160px;top:641px">Total</div>
<div class="t s r" style="right:65px;top:641px">Total</div>

</div></body></html>
